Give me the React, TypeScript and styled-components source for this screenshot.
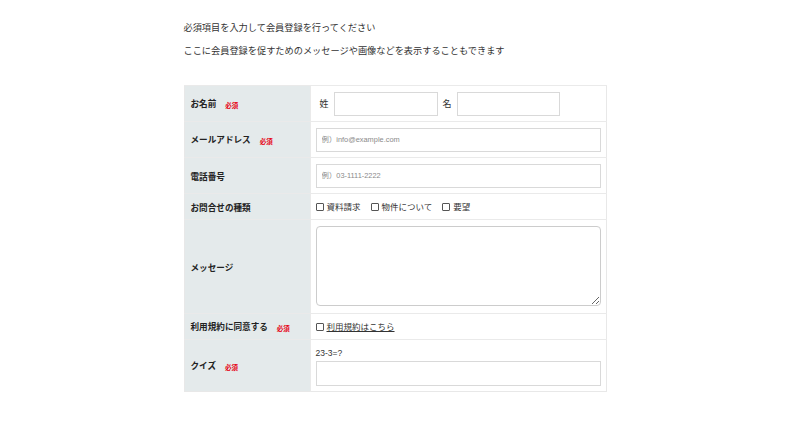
import React from "react";
import styled, { createGlobalStyle } from "styled-components";

const Global = createGlobalStyle`
  html, body { margin: 0; padding: 0; background: #fff; }
  body { font-family: "Noto Sans CJK JP", "Noto Sans", sans-serif; color: #333; }
`;

const Page = styled.div`
  width: 423px;
  margin: 0 auto;
  padding-top: 20px;
`;

const Lead = styled.p`
  margin: 0 0 9px;
  font-size: 9.2px;
  line-height: 14px;
  color: #333;
`;

const Table = styled.table`
  margin-top: 28px;
  width: 423px;
  border-collapse: collapse;
  border: 1px solid #e8e8e8;
`;

const Row = styled.tr<{ $h: number }>`
  height: ${(p) => p.$h}px;
  border-top: 1px solid #eaeaea;
`;

const Th = styled.th`
  width: 113px;
  background: #e4eaeb;
  padding: 0 6px;
  text-align: left;
  vertical-align: middle;
  font-size: 8.6px;
  font-weight: 700;
  color: #222;
  white-space: nowrap;
  border-right: 1px solid #eaeaea;
`;

const Required = styled.span`
  display: inline-block;
  margin-left: 9px;
  font-size: 6.5px;
  font-weight: 700;
  color: #e60012;
  vertical-align: middle;
`;

const Td = styled.td<{ $pb?: number }>`
  background: #fff;
  padding: 5px 5px ${(p) => (p.$pb ?? 5)}px;
  vertical-align: middle;
  font-size: 9px;
`;

const NameLine = styled.div`
  display: flex;
  align-items: center;
`;

const NameLabel = styled.span<{ $ml: number }>`
  margin-left: ${(p) => p.$ml}px;
  margin-right: 5px;
  font-size: 9px;
  color: #333;
`;

const Input = styled.input<{ $w?: number; $h?: number }>`
  box-sizing: border-box;
  display: block;
  width: ${(p) => (p.$w ? `${p.$w}px` : "100%")};
  height: ${(p) => p.$h ?? 24}px;
  border: 1px solid #d9d9d9;
  border-radius: 0;
  padding: 0 5px;
  font-family: "Liberation Sans", "Noto Sans CJK JP", sans-serif;
  font-size: 7.4px;
  color: #333;
  outline: none;
  &::placeholder { color: #8a8a8a; }
`;

const Area = styled.textarea`
  box-sizing: border-box;
  display: block;
  width: 100%;
  height: 80px;
  border: 1px solid #ccc;
  border-radius: 4px;
  padding: 4px;
  font-family: inherit;
  font-size: 8px;
  outline: none;
`;

const Checks = styled.div`
  display: flex;
  align-items: center;
  gap: 10px;
`;

const CheckItem = styled.label`
  display: inline-flex;
  align-items: center;
  gap: 3px;
  font-size: 8.5px;
  line-height: 15px;
  color: #333;
`;

const Box = styled.span`
  box-sizing: border-box;
  display: inline-block;
  width: 8px;
  height: 8px;
  border: 1px solid #555;
  border-radius: 1px;
  background: #fff;
`;

const Link = styled.a`
  color: #333;
  text-decoration: underline;
`;

const Question = styled.div`
  font-family: "Liberation Sans", sans-serif;
  font-size: 8.5px;
  line-height: 14px;
  margin-bottom: 1px;
  color: #333;
`;

export default function App() {
  return (
    <>
      <Global />
      <Page>
        <Lead>必須項目を入力して会員登録を行ってください</Lead>
        <Lead>ここに会員登録を促すためのメッセージや画像などを表示することもできます</Lead>
        <Table>
          <tbody>
            <Row $h={36}>
              <Th>
                お名前<Required>必須</Required>
              </Th>
              <Td>
                <NameLine>
                  <NameLabel $ml={4}>姓</NameLabel>
                  <Input $w={104} />
                  <NameLabel $ml={5}>名</NameLabel>
                  <Input $w={103} />
                </NameLine>
              </Td>
            </Row>
            <Row $h={36}>
              <Th>
                メールアドレス<Required>必須</Required>
              </Th>
              <Td>
                <Input placeholder="例）info@example.com" />
              </Td>
            </Row>
            <Row $h={36}>
              <Th>電話番号</Th>
              <Td>
                <Input placeholder="例）03-1111-2222" />
              </Td>
            </Row>
            <Row $h={26}>
              <Th>お問合せの種類</Th>
              <Td>
                <Checks>
                  <CheckItem>
                    <Box />
                    資料請求
                  </CheckItem>
                  <CheckItem>
                    <Box />
                    物件について
                  </CheckItem>
                  <CheckItem>
                    <Box />
                    要望
                  </CheckItem>
                </Checks>
              </Td>
            </Row>
            <Row $h={94}>
              <Th>メッセージ</Th>
              <Td $pb={7}>
                <Area />
              </Td>
            </Row>
            <Row $h={26}>
              <Th>
                利用規約に同意する<Required>必須</Required>
              </Th>
              <Td>
                <CheckItem>
                  <Box />
                  <Link href="#">利用規約はこちら</Link>
                </CheckItem>
              </Td>
            </Row>
            <Row $h={52}>
              <Th>
                クイズ<Required>必須</Required>
              </Th>
              <Td>
                <Question>23-3=?</Question>
                <Input $h={25} />
              </Td>
            </Row>
          </tbody>
        </Table>
      </Page>
    </>
  );
}
